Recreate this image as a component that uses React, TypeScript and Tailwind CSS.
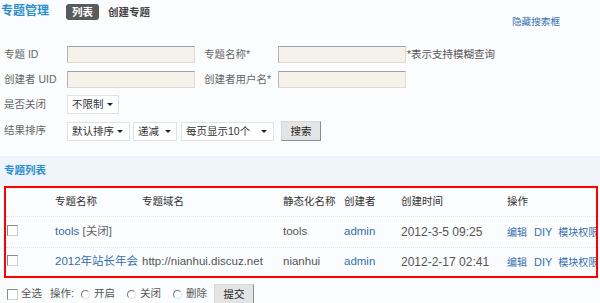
import React from "react";

const Input = ({ w = "w-[128px]" }: { w?: string }) => (
  <div
    className={`${w} h-[17px] border border-t-[#a3a3a3] border-l-[#b5b5b5] border-r-[#dedad2] border-b-[#dedad2] bg-[#f5f2ec]`}
  />
);

const Select = ({ text, w, arrowMr = "mr-[8px]" }: { text: string; w: string; arrowMr?: string }) => (
  <div
    className={`${w} h-[19px] flex items-center border border-[#e2e2e2] bg-white pl-[4px] text-[10.5px] text-[#333]`}
  >
    <span className="leading-none">{text}</span>
    <span
      className={`ml-auto ${arrowMr} w-0 h-0 border-l-[3px] border-r-[3px] border-t-[3px] border-l-transparent border-r-transparent border-t-[#222]`}
    />
  </div>
);

const Checkbox = () => (
  <span className="inline-block w-[11px] h-[11px] bg-white border border-t-[#8a8a8a] border-l-[#8a8a8a] border-r-[#cfcfcf] border-b-[#cfcfcf]" />
);

const Radio = () => (
  <span className="inline-block w-[9px] h-[9px] rounded-full bg-white border border-t-[#777] border-l-[#777] border-r-[#e0e0e0] border-b-[#e0e0e0]" />
);

const rows = [
  {
    name: "tools",
    closed: true,
    domain: "",
    stat: "tools",
    creator: "admin",
    time: "2012-3-5 09:25",
  },
  {
    name: "2012年站长年会",
    closed: false,
    domain: "http://nianhui.discuz.net",
    stat: "nianhui",
    creator: "admin",
    time: "2012-2-17 02:41",
  },
];

const gridCols = "grid grid-cols-[49px_87px_141px_61px_57px_106px_1fr]";

export default function App() {
  return (
    <div className="w-[600px] h-[303px] overflow-hidden bg-[#fbfcfd] font-['Liberation_Sans','Noto_Sans_CJK_SC',sans-serif] text-[#666]">
      {/* header */}
      <div className="flex items-start h-[42px]">
        <span className="ml-[1px] mt-[4px] text-[12px] leading-[14px] font-bold text-[#2a8fd0]">专题管理</span>
        <span className="ml-[17px] mt-[4px] h-[16px] px-[6px] rounded-[3px] bg-[#5a5a5a] text-white text-[10.5px] font-bold leading-[16px]">
          列表
        </span>
        <span className="ml-[9px] mt-[4px] text-[10.5px] leading-[16px] font-bold text-[#444]">创建专题</span>
        <span className="ml-auto mr-[40px] mt-[16px] text-[9.6px] leading-[12px] text-[#336fb0]">隐藏搜索框</span>
      </div>

      {/* search form */}
      <div className="pl-[4px] text-[10.5px]">
        <div className="flex items-center h-[25px]">
          <span className="w-[63px]">专题 ID</span>
          <Input />
          <span className="ml-[9px] w-[74px]">专题名称*</span>
          <Input />
          <span className="ml-[1px] text-[#555]">*表示支持模糊查询</span>
        </div>
        <div className="flex items-center h-[25px]">
          <span className="w-[63px]">创建者 UID</span>
          <Input />
          <span className="ml-[9px] w-[74px]">创建者用户名*</span>
          <Input />
        </div>
        <div className="flex items-center h-[25px]">
          <span className="w-[63px]">是否关闭</span>
          <Select text="不限制" w="w-[52px]" arrowMr="mr-[5px]" />
        </div>
        <div className="flex items-center h-[28px]">
          <span className="w-[63px]">结果排序</span>
          <Select text="默认排序" w="w-[63px]" arrowMr="mr-[6px]" />
          <div className="ml-[3px]">
            <Select text="递减" w="w-[44px]" arrowMr="mr-[5px]" />
          </div>
          <div className="ml-[4px]">
            <Select text="每页显示10个" w="w-[93px]" arrowMr="mr-[6px]" />
          </div>
          <button className="ml-[7px] w-[40px] h-[20px] bg-[#e4e4e4] border border-t-[#d8d8d8] border-l-[#d8d8d8] border-r-[#8c8c8c] border-b-[#8c8c8c] text-[10.5px] text-[#222] leading-none">
            搜索
          </button>
        </div>
      </div>

      {/* list section band */}
      <div className="mt-[11px] h-[30px] flex items-center bg-[#eef4fa] pl-[4px]">
        <span className="text-[10.5px] font-bold text-[#2a8fd0]">专题列表</span>
      </div>

      {/* table */}
      <div className="ml-[4px] w-[594px] h-[92px] border-2 border-[#ff0000] overflow-hidden bg-[#fbfcfd] text-[10.5px]">
        <div className={`${gridCols} h-[28px] items-center text-[#333]`}>
          <span />
          <span>专题名称</span>
          <span>专题域名</span>
          <span>静态化名称</span>
          <span>创建者</span>
          <span>创建时间</span>
          <span>操作</span>
        </div>
        {rows.map((r, i) => (
          <div
            key={i}
            className={`${gridCols} ${i === 0 ? "h-[31px]" : "h-[29px]"} items-center border-t border-dotted border-[#e2e6ea] whitespace-nowrap`}
          >
            <span className="pl-[1px] flex items-center -mt-[3px]">
              <Checkbox />
            </span>
            <span className="text-[11.5px]">
              <span className="text-[#336fb0]">{r.name}</span>
              {r.closed && <span className="text-[#666]"> [关闭]</span>}
            </span>
            <span className="text-[11.5px] text-[#555]">{r.domain}</span>
            <span className="text-[11.5px] text-[#555]">{r.stat}</span>
            <span className="text-[11.5px] text-[#336fb0]">{r.creator}</span>
            <span className="text-[12px] text-[#555]">{r.time}</span>
            <span className="text-[10px] text-[#336fb0] flex items-center">
              <span>编辑</span>
              <span className="ml-[7px] text-[11px]">DIY</span>
              <span className="ml-[6px]">模块权限</span>
            </span>
          </div>
        ))}
      </div>

      {/* bottom actions */}
      <div className="mt-[6px] h-[20px] flex items-center pl-[7px] text-[10.5px] text-[#555]">
        <Checkbox />
        <span className="ml-[3px]">全选</span>
        <span className="ml-[8px]">操作:</span>
        <span className="ml-[7px] flex items-center"><Radio /></span>
        <span className="ml-[4px]">开启</span>
        <span className="ml-[12px] flex items-center"><Radio /></span>
        <span className="ml-[4px]">关闭</span>
        <span className="ml-[12px] flex items-center"><Radio /></span>
        <span className="ml-[4px]">删除</span>
        <button className="ml-[7px] w-[40px] h-[20px] bg-[#e4e4e4] border border-t-[#d8d8d8] border-l-[#d8d8d8] border-r-[#8c8c8c] border-b-[#8c8c8c] text-[10.5px] text-[#222] leading-none">
          提交
        </button>
      </div>
    </div>
  );
}
